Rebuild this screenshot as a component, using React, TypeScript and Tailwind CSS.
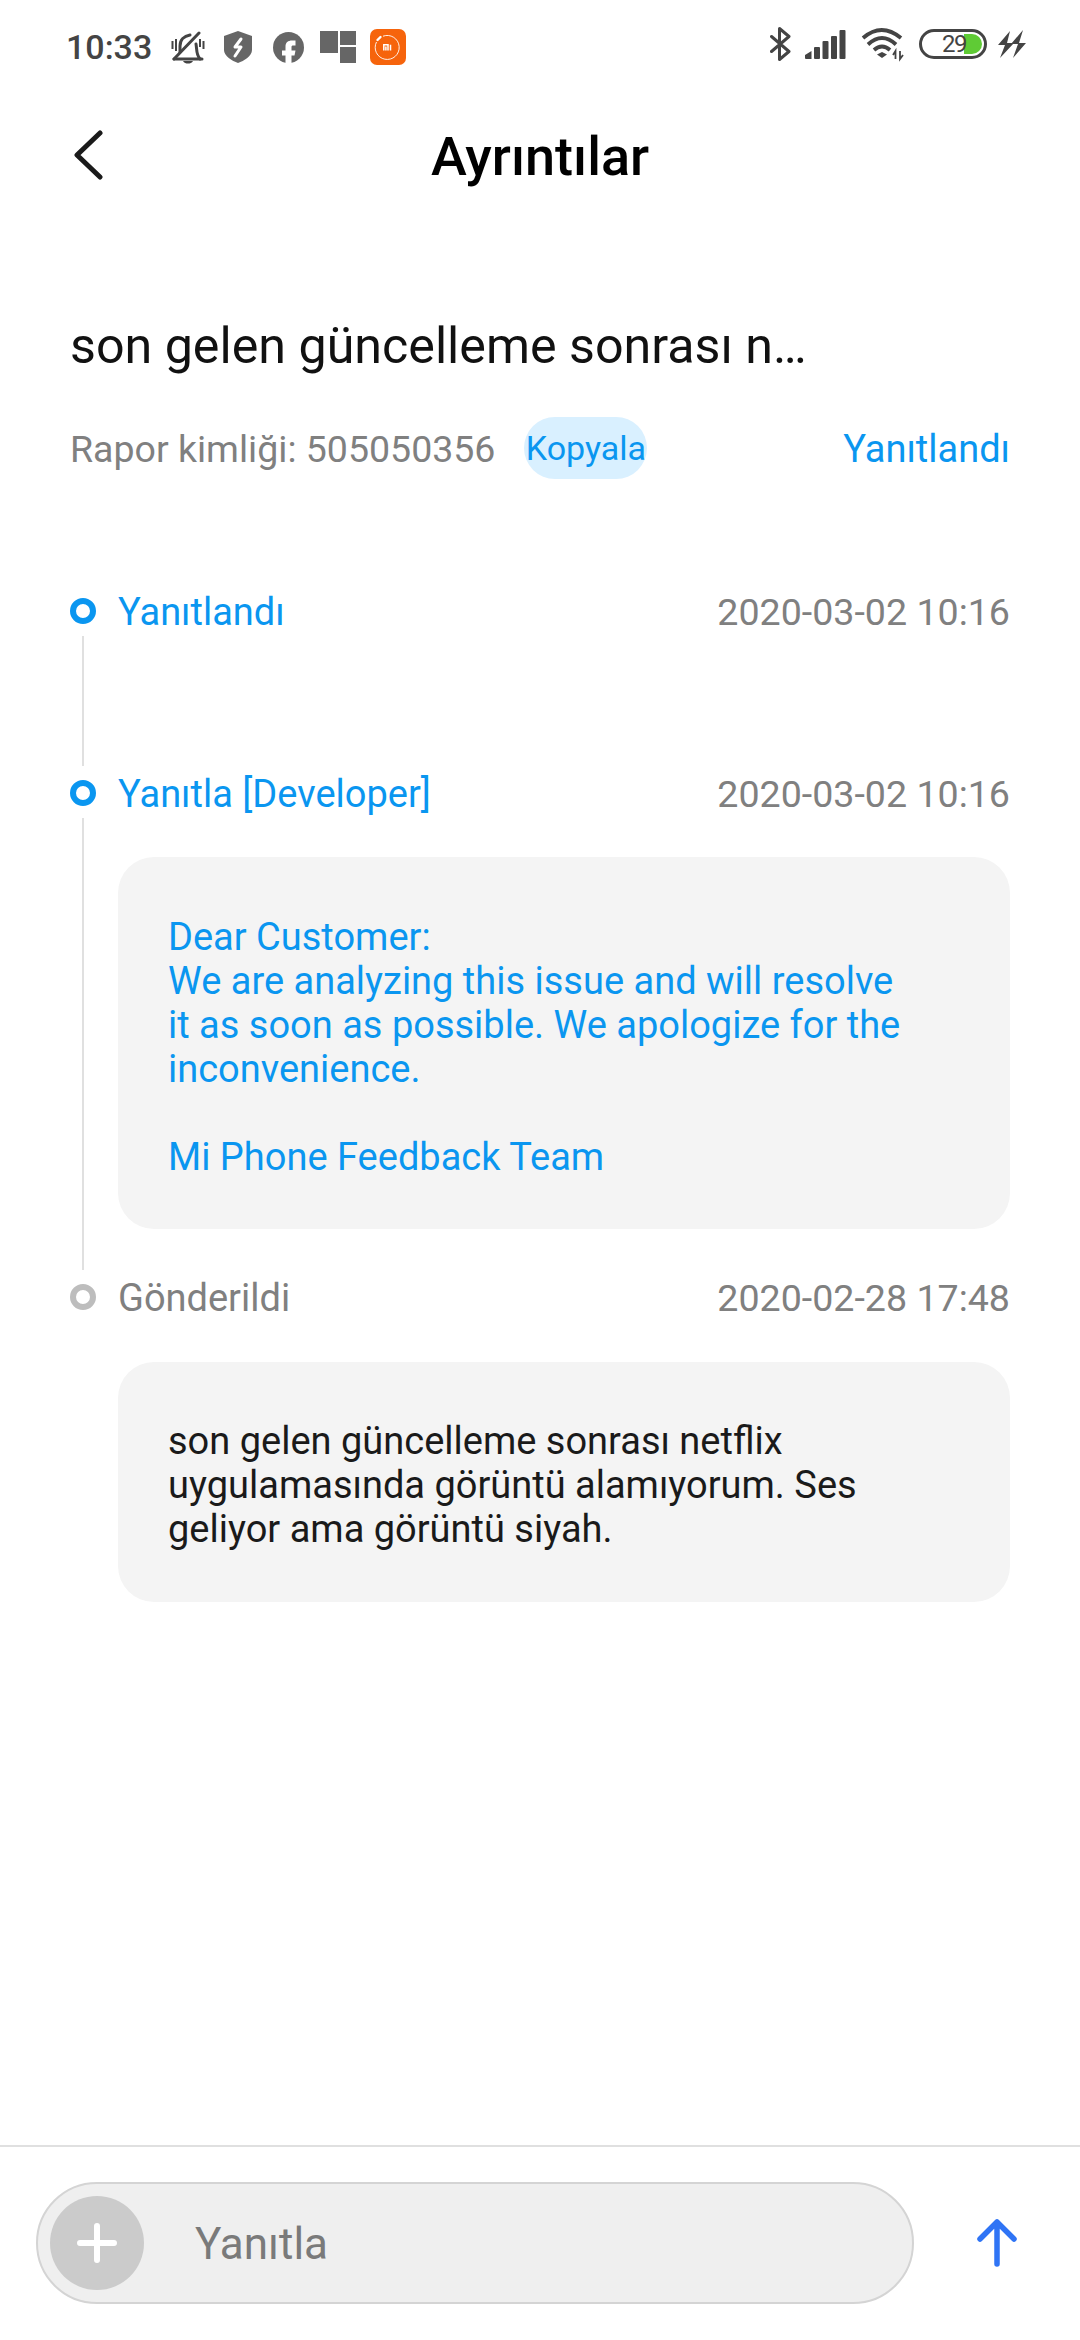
const roboto = "[font-family:Roboto,'Noto_Sans',sans-serif]";

function StatusLeft() {
  return (
    <div className="flex items-center">
      <span className="text-[34px] leading-[40px] font-medium text-[#444444] w-[105px]">10:33</span>
      <svg width="34" height="33" viewBox="0 0 34 33" fill="none" stroke="#444" strokeWidth="3" strokeLinecap="round" strokeLinejoin="round">
        <path d="M3 28H31" />
        <path d="M3 28 28 2" />
        <path d="M9 21V15C9 9 13 5 19 4" />
        <path d="M25 13C26 18 25 24 29 28" />
        <path d="M12 30h10c-1 2-3 2.500-5 2.500s-4-.5-5-2.500z" fill="#444" stroke="none" />
        <path d="M1.500 10v8M5 8v12M32.500 10v8M29 8v8" strokeWidth="2" strokeLinecap="butt" />
      </svg>
      <svg className="ml-[19px]" width="28" height="32" viewBox="0 0 28 32">
        <path d="M14 0 28 5v14c0 6-8 11-14 13C8 30 0 25 0 19V5z" fill="#666" />
        <path d="M17 8 11 16H17L11 25" fill="none" stroke="#fff" strokeWidth="3" strokeLinecap="round" strokeLinejoin="round" />
      </svg>
      <svg className="ml-[21px]" width="31" height="31" viewBox="0 0 31 31">
        <circle cx="15.500" cy="15.500" r="15.500" fill="#666" />
        <path d="M12.500 31V23.500H9V18.500H12.500V14.500C12.500 10.500 15 8.500 19 8.500H22.500V13.500H20C19 13.500 18.500 14 18.500 15V18.500H22.500L21.500 23.500H18.500V31Z" fill="#fff" />
      </svg>
      <div className="ml-[16px] flex gap-[2px] w-[36px] h-[32px]">
        <div className="w-[18px] h-[22px] bg-[#666]" />
        <div className="flex flex-col gap-[2px]">
          <div className="w-[16px] h-[14px] bg-[#666]" />
          <div className="w-[16px] h-[16px] bg-[#666]" />
        </div>
      </div>
      <div className="ml-[14px] w-[36px] h-[36px] rounded-[7px] bg-[#f6640c]">
        <svg width="36" height="36" viewBox="0 0 36 36" fill="none" stroke="#fff">
          <path d="M13 7.200A12 12 0 1 1 6.500 13" strokeWidth="0.9" />
          <path d="M7.500 11 10.500 8" strokeWidth="2.400" strokeLinecap="round" />
          <path d="M13.800 21.500V15.800H18V21.500M15.900 17.500V21.500M20.500 15.800V21.500" strokeWidth="1.500" />
        </svg>
      </div>
    </div>
  );
}

function StatusRight() {
  return (
    <div className="flex items-center">
      <svg width="21" height="34" viewBox="0 0 21 34" fill="none" stroke="#444" strokeWidth="3" strokeLinejoin="round" strokeLinecap="round">
        <path d="M1.500 9.500 19 24.500 9.500 32.500V1.500L19 9.500 1.500 24.500" />
      </svg>
      <svg className="ml-[14px]" width="41" height="29" viewBox="0 0 41 29" fill="#444">
        <path d="M0 25 6.500 21V29H1a1 1 0 0 1-1-1z" />
        <rect x="9" y="17" width="6" height="12" rx="1" />
        <rect x="17.500" y="11" width="6" height="18" rx="1" />
        <rect x="26" y="6" width="6" height="23" rx="1" />
        <rect x="34.500" y="0" width="6" height="29" rx="1" />
      </svg>
      <svg className="ml-[15px] overflow-visible" width="42" height="30" viewBox="0 0 42 30" fill="none" stroke="#444" strokeWidth="3.800">
        <path d="M2 9Q20.500-7 40 9" />
        <path d="M7 15.500Q21 2.500 35 15.500" />
        <path d="M13 21Q21 14 29 21" />
        <path d="M16 25.500 21 23 26 25.500 21 29z" fill="#444" stroke="none" />
        <path d="M34.500 30V22L32 26M39 22V30L42 26" strokeWidth="1.800" />
      </svg>
      <div className="ml-[16px] relative w-[68px] h-[30px] rounded-full border-[3px] border-[#444] flex items-center">
        <div className="absolute right-[2px] top-[2px] w-[18px] h-[20px] rounded-r-full bg-[#5fcb35]" />
        <span className="relative ml-[20px] text-[24px] leading-[24px] tracking-[-1.5px] text-[#444]">29</span>
      </div>
      <svg className="ml-[10px]" width="29" height="30" viewBox="0 0 29 30" fill="#444">
        <path d="M13 2 1 16H8L3 29 17 14H10ZM26 1 14 15H21L16 29 29 14H22Z" />
      </svg>
    </div>
  );
}

function Item({
  dot,
  label,
  labelColor,
  date,
  line,
  children,
}: {
  dot: string;
  label: string;
  labelColor: string;
  date: string;
  line: boolean;
  children?: React.ReactNode;
}) {
  return (
    <div className="flex gap-[22px]">
      <div className="flex flex-col items-center w-[26px] shrink-0">
        <div className={`w-[26px] h-[26px] rounded-full border-[6px] bg-white shrink-0 ${dot}`} />
        {line && <div className="w-[2px] flex-1 bg-[#e0e0e0] mt-[12px] mb-[14px]" />}
      </div>
      <div className="flex-1 min-w-0">
        <div className="flex justify-between items-center h-[26px] pt-[2px]">
          <span className={`text-[38px] ${labelColor}`}>{label}</span>
          <span className="text-[37.600px] text-[#808080]">{date}</span>
        </div>
        {children}
      </div>
    </div>
  );
}

export default function App() {
  return (
    <div className={`w-[1080px] h-[2340px] bg-white flex flex-col ${roboto}`}>
      <div className="h-[92px] pt-[27px] pl-[66px] pr-[54px] flex justify-between items-start shrink-0">
        <StatusLeft />
        <StatusRight />
      </div>

      <div className="relative h-[130px] flex items-center justify-center shrink-0">
        <svg className="absolute left-[73px] top-[38px]" width="30" height="50" viewBox="0 0 30 50" fill="none" stroke="#1a1a1a" strokeWidth="5" strokeLinecap="round" strokeLinejoin="round">
          <path d="M27 3 4 25l23 22" />
        </svg>
        <h1 className="text-[54px] leading-[70px] font-medium text-black">Ayrıntılar</h1>
      </div>

      <div className="flex-1 px-[70px]">
        <div className="mt-[91px] text-[50.200px] leading-[66px] text-[#111111]">son gelen güncelleme sonrası n…</div>
        <div className="mt-[38px] flex items-center justify-between h-[62px]">
          <div className="flex items-center">
            <span className="text-[37.500px] pt-[3px] text-[#808080]">Rapor kimliği: 505050356</span>
            <span className="ml-[29px] w-[123px] h-[62px] rounded-full bg-[#d9f0ff] flex items-center justify-center text-[34px] pt-[1px] text-[#0a96f0]">Kopyala</span>
          </div>
          <span className="text-[38px] pt-[3px] text-[#0a96f0]">Yanıtlandı</span>
        </div>

        <div className="mt-[119px]">
          <Item dot="border-[#0a96f0]" label="Yanıtlandı" labelColor="text-[#0a96f0]" date="2020-03-02 10:16" line>
            <div className="h-[156px]" />
          </Item>
          <Item dot="border-[#0a96f0]" label="Yanıtla [Developer]" labelColor="text-[#0a96f0]" date="2020-03-02 10:16" line>
            <div className="mt-[51px] mb-[55px] rounded-[36px] bg-[#f4f4f4] pl-[50px] pr-[97px] pt-[58px] pb-[50px] text-[38px] leading-[44px] text-[#0a96f0]">
              <p>Dear Customer:</p>
              <p>We are analyzing this issue and will resolve it as soon as possible. We apologize for the inconvenience.</p>
              <p className="mt-[44px]">Mi Phone Feedback Team</p>
            </div>
          </Item>
          <Item dot="border-[#bdbdbd]" label="Gönderildi" labelColor="text-[#808080]" date="2020-02-28 17:48" line={false}>
            <div className="mt-[52px] rounded-[36px] bg-[#f4f4f4] pl-[50px] pr-[97px] pt-[57px] pb-[51px] text-[38px] leading-[44px] text-[#1a1a1a]">
              son gelen güncelleme sonrası netflix uygulamasında görüntü alamıyorum. Ses geliyor ama görüntü siyah.
            </div>
          </Item>
        </div>
      </div>

      <div className="h-[195px] shrink-0 border-t-2 border-[#e0e0e0] pl-[36px] pt-[35px] flex items-start">
        <div className="w-[878px] h-[122px] rounded-full bg-[#efefef] border-2 border-[#d4d4d4] flex items-center pl-[12px]">
          <div className="w-[94px] h-[94px] rounded-full bg-[#cbcbcb] flex items-center justify-center">
            <svg width="40" height="40" viewBox="0 0 40 40" stroke="#fff" strokeWidth="6" strokeLinecap="round">
              <path d="M20 3v34M3 20h34" />
            </svg>
          </div>
          <span className="ml-[51px] pt-[2px] text-[44px] text-[#7a7a7a]">Yanıtla</span>
        </div>
        <svg className="ml-[61px] mt-[36px]" width="44" height="50" viewBox="0 0 44 50" fill="none" stroke="#2f74f5" strokeWidth="5.500" strokeLinecap="round" strokeLinejoin="round">
          <path d="M22 46V4M5 21 22 4 39 21" />
        </svg>
      </div>
    </div>
  );
}
